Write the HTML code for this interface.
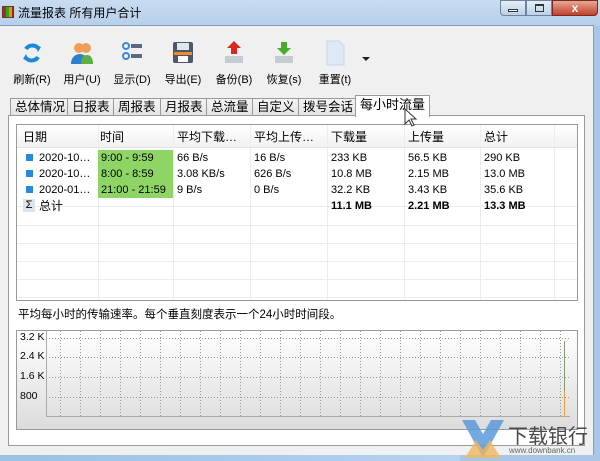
<!DOCTYPE html>
<html><head><meta charset="utf-8"><style>
*{margin:0;padding:0;box-sizing:border-box}
body{width:600px;height:461px;overflow:hidden;background:#a9c6e6;font-family:"Liberation Sans","Noto Sans CJK SC",sans-serif;font-size:12px;color:#000;position:relative}
.abs{position:absolute}
.title{left:0;top:0;width:600px;height:26px;background:linear-gradient(#c9dcf0,#b6cfea)}
.client{left:0;top:25px;width:594px;height:430px;background:#f0f0f0;border-right:1px solid #8a9bb0;border-top:1px solid #8a9bb0}
.tb{top:40px;width:56px;text-align:center;font-size:11px}
.tb .ic{height:26px;margin:0 auto 5px;position:relative}
.tab{top:98px;height:18px;border:1px solid #9a9a9a;border-bottom:none;background:linear-gradient(#f4f4f4,#e2e2e2);font-size:12.5px;padding:1px 4px;line-height:15px}
.panel{left:8px;top:115px;width:577px;height:331px;background:#fff;border:1px solid #9a9a9a}
.grid{left:16px;top:124px;width:562px;height:177px;border:1px solid #9a9a9a;background:#fff}
.col{position:absolute;top:0;bottom:0;border-left:1px solid #ececec}
.cell{position:absolute;font-size:11px;line-height:16px;white-space:nowrap}
.hline{position:absolute;left:0;right:0;border-top:1px solid #ececec}
</style></head><body>
<div class="abs title"></div>
<div class="abs" style="left:2px;top:6px;width:12px;height:12px;background:linear-gradient(90deg,#b22 0 3px,#2a2 3px 6px,#d90 6px 9px,#a22 9px);border:1px solid #633"></div>
<div class="abs" style="left:18px;top:4px;font-size:12px">流量报表 所有用户合计</div>
<div class="abs" style="left:500px;top:0;width:26px;height:16px;background:linear-gradient(#e4eef9,#bcd0e8);border:1px solid #6f829a;border-radius:0 0 0 4px"><div style="margin:8px auto 0;width:10px;height:3px;border:1px solid #333;background:#fff"></div></div>
<div class="abs" style="left:526px;top:0;width:26px;height:16px;background:linear-gradient(#e4eef9,#bcd0e8);border:1px solid #6f829a"><div style="margin:3px auto 0;width:9px;height:8px;border:1px solid #333;border-top-width:2px"></div></div>
<div class="abs" style="left:552px;top:0;width:46px;height:16px;background:linear-gradient(#e8a796,#c2402a);border:1px solid #7a2a20;border-radius:0 0 4px 0;color:#fff;font-weight:bold;text-align:center;font-size:12px;line-height:14px">x</div>
<div class="abs client"></div>

<div class="abs tb" style="left:4px"><div class="ic"><svg width="26" height="26" viewBox="0 0 26 26"><path d="M7 9a7 6 0 0 1 12-1M19 17a7 6 0 0 1-12 1" stroke="#1a8ad8" stroke-width="4" fill="none"/><path d="M16 5l6 2-3 5z M10 21l-6-2 3-5z" fill="#1a8ad8"/></svg></div>刷新(R)</div>
<div class="abs tb" style="left:54px"><div class="ic"><svg width="26" height="26"><circle cx="10" cy="8" r="5" fill="#f0a050"/><circle cx="17" cy="8" r="5" fill="#e8a060"/><path d="M2 24c0-8 6-10 9-10s8 2 8 10z" fill="#2f7fd0"/><path d="M12 24c0-7 3-9 6-9s6 2 6 9z" fill="#5bb040"/></svg></div>用户(U)</div>
<div class="abs tb" style="left:104px"><div class="ic"><svg width="26" height="26"><circle cx="7" cy="6" r="3" fill="none" stroke="#3a8ad8" stroke-width="2"/><circle cx="7" cy="16" r="3" fill="none" stroke="#3a8ad8" stroke-width="2"/><rect x="12" y="4" width="11" height="4" fill="#5a6a80"/><rect x="12" y="14" width="11" height="4" fill="#5a6a80"/></svg></div>显示(D)</div>
<div class="abs tb" style="left:155px"><div class="ic"><svg width="26" height="26"><rect x="3" y="2" width="20" height="21" rx="2" fill="#4a5868"/><rect x="7" y="3" width="12" height="7" fill="#e0e6ee"/><rect x="4" y="12" width="18" height="3" fill="#f08a30"/><rect x="8" y="16" width="10" height="6" fill="#fff"/></svg></div>导出(E)</div>
<div class="abs tb" style="left:206px"><div class="ic"><svg width="26" height="26"><path d="M13 1l7 7h-4v6h-6v-6h-4z" fill="#d8281e"/><rect x="4" y="16" width="18" height="7" fill="#c4ccd4"/></svg></div>备份(B)</div>
<div class="abs tb" style="left:256px"><div class="ic"><svg width="26" height="26"><path d="M13 15l7-7h-4v-6h-6v6h-4z" fill="#4caa2c"/><rect x="4" y="16" width="18" height="7" fill="#c4ccd4"/></svg></div>恢复(s)</div>
<div class="abs tb" style="left:307px"><div class="ic"><svg width="26" height="26"><path d="M5 1h12l5 5v19h-17z" fill="#ddeaf6" stroke="#c8d6e4"/></svg></div>重置(t)</div>
<div class="abs" style="left:362px;top:57px;width:0;height:0;border:4px solid transparent;border-top:4px solid #222"></div>

<div class="abs tab" style="left:10px">总体情况</div>
<div class="abs tab" style="left:67px">日报表</div>
<div class="abs tab" style="left:113px">周报表</div>
<div class="abs tab" style="left:160px">月报表</div>
<div class="abs tab" style="left:206px">总流量</div>
<div class="abs tab" style="left:252px">自定义</div>
<div class="abs tab" style="left:298px">拨号会话</div>
<div class="abs panel"></div>
<div class="abs tab" style="left:355px;top:95px;height:22px;background:#fff;z-index:2;font-size:13px">每小时流量</div>
<svg class="abs" style="left:404px;top:108px;z-index:3" width="14" height="20"><path d="M1 1v15l4-4 3 6 2-1-3-6h5z" fill="#fff" stroke="#333"/></svg>

<div class="abs grid">
 <div style="position:absolute;left:0;right:0;top:0;height:23px;background:linear-gradient(#fff,#f2f2f2);border-bottom:1px solid #e4e4e4"></div>
 <div class="col" style="left:81px"></div><div class="col" style="left:156px"></div><div class="col" style="left:233px"></div><div class="col" style="left:310px"></div><div class="col" style="left:387px"></div><div class="col" style="left:463px"></div><div class="col" style="left:537px"></div>
 <div class="hline" style="top:81px"></div><div class="hline" style="top:100px"></div><div class="hline" style="top:118px"></div><div class="hline" style="top:136px"></div><div class="hline" style="top:154px"></div><div class="hline" style="top:172px"></div>
 <div class="cell" style="left:6px;top:4px;font-size:12px">日期</div>
 <div class="cell" style="left:83px;top:4px;font-size:12px">时间</div>
 <div class="cell" style="left:160px;top:4px;font-size:12px">平均下载…</div>
 <div class="cell" style="left:237px;top:4px;font-size:12px">平均上传…</div>
 <div class="cell" style="left:314px;top:4px;font-size:12px">下载量</div>
 <div class="cell" style="left:391px;top:4px;font-size:12px">上传量</div>
 <div class="cell" style="left:467px;top:4px;font-size:12px">总计</div>

 <div style="position:absolute;left:81px;top:25px;width:75px;height:48px;background:#8fd566"></div>
 <div style="position:absolute;left:9px;top:29px;width:7px;height:7px;background:#2a8ad8"></div>
 <div style="position:absolute;left:9px;top:45px;width:7px;height:7px;background:#2a8ad8"></div>
 <div style="position:absolute;left:9px;top:61px;width:7px;height:7px;background:#2a8ad8"></div>
 <div class="cell" style="left:22px;top:25px">2020-10…</div><div class="cell" style="left:84px;top:25px">9:00 - 9:59</div><div class="cell" style="left:160px;top:25px">66 B/s</div><div class="cell" style="left:237px;top:25px">16 B/s</div><div class="cell" style="left:314px;top:25px">233 KB</div><div class="cell" style="left:391px;top:25px">56.5 KB</div><div class="cell" style="left:467px;top:25px">290 KB</div>
 <div class="cell" style="left:22px;top:41px">2020-10…</div><div class="cell" style="left:84px;top:41px">8:00 - 8:59</div><div class="cell" style="left:160px;top:41px">3.08 KB/s</div><div class="cell" style="left:237px;top:41px">626 B/s</div><div class="cell" style="left:314px;top:41px">10.8 MB</div><div class="cell" style="left:391px;top:41px">2.15 MB</div><div class="cell" style="left:467px;top:41px">13.0 MB</div>
 <div class="cell" style="left:22px;top:57px">2020-01…</div><div class="cell" style="left:84px;top:57px">21:00 - 21:59</div><div class="cell" style="left:160px;top:57px">9 B/s</div><div class="cell" style="left:237px;top:57px">0 B/s</div><div class="cell" style="left:314px;top:57px">32.2 KB</div><div class="cell" style="left:391px;top:57px">3.43 KB</div><div class="cell" style="left:467px;top:57px">35.6 KB</div>
 <div style="position:absolute;left:6px;top:74px;width:12px;height:13px;background:#dde3ea;font-size:11px;line-height:13px;text-align:center">Σ</div>
 <div class="cell" style="left:22px;top:73px;font-size:12px">总计</div>
 <div class="cell" style="left:314px;top:73px;font-weight:bold">11.1 MB</div><div class="cell" style="left:391px;top:73px;font-weight:bold">2.21 MB</div><div class="cell" style="left:467px;top:73px;font-weight:bold">13.3 MB</div>
</div>

<div class="abs" style="left:18px;top:306px;font-size:11.5px">平均每小时的传输速率。每个垂直刻度表示一个24小时时间段。</div>

<div class="abs" style="left:16px;top:330px;width:562px;height:100px;border:1px solid #9a9a9a;background:linear-gradient(#fff,#dcdcdc)"></div>
<svg class="abs" style="left:46px;top:331px" width="524" height="86">
 <defs><pattern id="v" x="14" width="20" height="86" patternUnits="userSpaceOnUse"><line x1="0.5" y1="0" x2="0.5" y2="86" stroke="#999" stroke-dasharray="1,2"/></pattern></defs>
 <rect x="0" y="0" width="524" height="86" fill="url(#v)"/>
 <g stroke="#999" stroke-dasharray="1,2"><line x1="0" y1="7.5" x2="524" y2="7.5"/><line x1="0" y1="26.5" x2="524" y2="26.5"/><line x1="0" y1="46.5" x2="524" y2="46.5"/><line x1="0" y1="66.5" x2="524" y2="66.5"/></g>
 <line x1="0.5" y1="0" x2="0.5" y2="86" stroke="#aaa"/><line x1="0" y1="85.5" x2="524" y2="85.5" stroke="#aaa"/>
 <line x1="518.5" y1="10" x2="518.5" y2="60" stroke="#7f9a72"/><line x1="518.5" y1="60" x2="518.5" y2="86" stroke="#f0a040"/>
</svg>
<div class="abs" style="left:20px;top:331px;font-size:10.5px">3.2 K</div>
<div class="abs" style="left:20px;top:350px;font-size:10.5px">2.4 K</div>
<div class="abs" style="left:20px;top:370px;font-size:10.5px">1.6 K</div>
<div class="abs" style="left:20px;top:390px;font-size:10.5px">800</div>

<svg class="abs" style="left:462px;top:420px" width="42" height="38"><path d="M0 0h13l8 14 8-14h13l-21 38z" fill="#5a9ad8" opacity=".85"/><path d="M3 38l11-18 7 10 7-10 11 18z" fill="#f0b860" opacity=".8"/></svg>
<div class="abs" style="left:508px;top:420px;font-size:20px;color:#4a4a4a">下载银行</div>
<div class="abs" style="left:509px;top:446px;font-size:8px;color:#666">www.downbank.cn</div>
<div class="abs" style="left:0;top:455px;width:460px;height:6px;background:linear-gradient(90deg,#9cc0e4,#b6d2ee)"></div>
</body></html>
